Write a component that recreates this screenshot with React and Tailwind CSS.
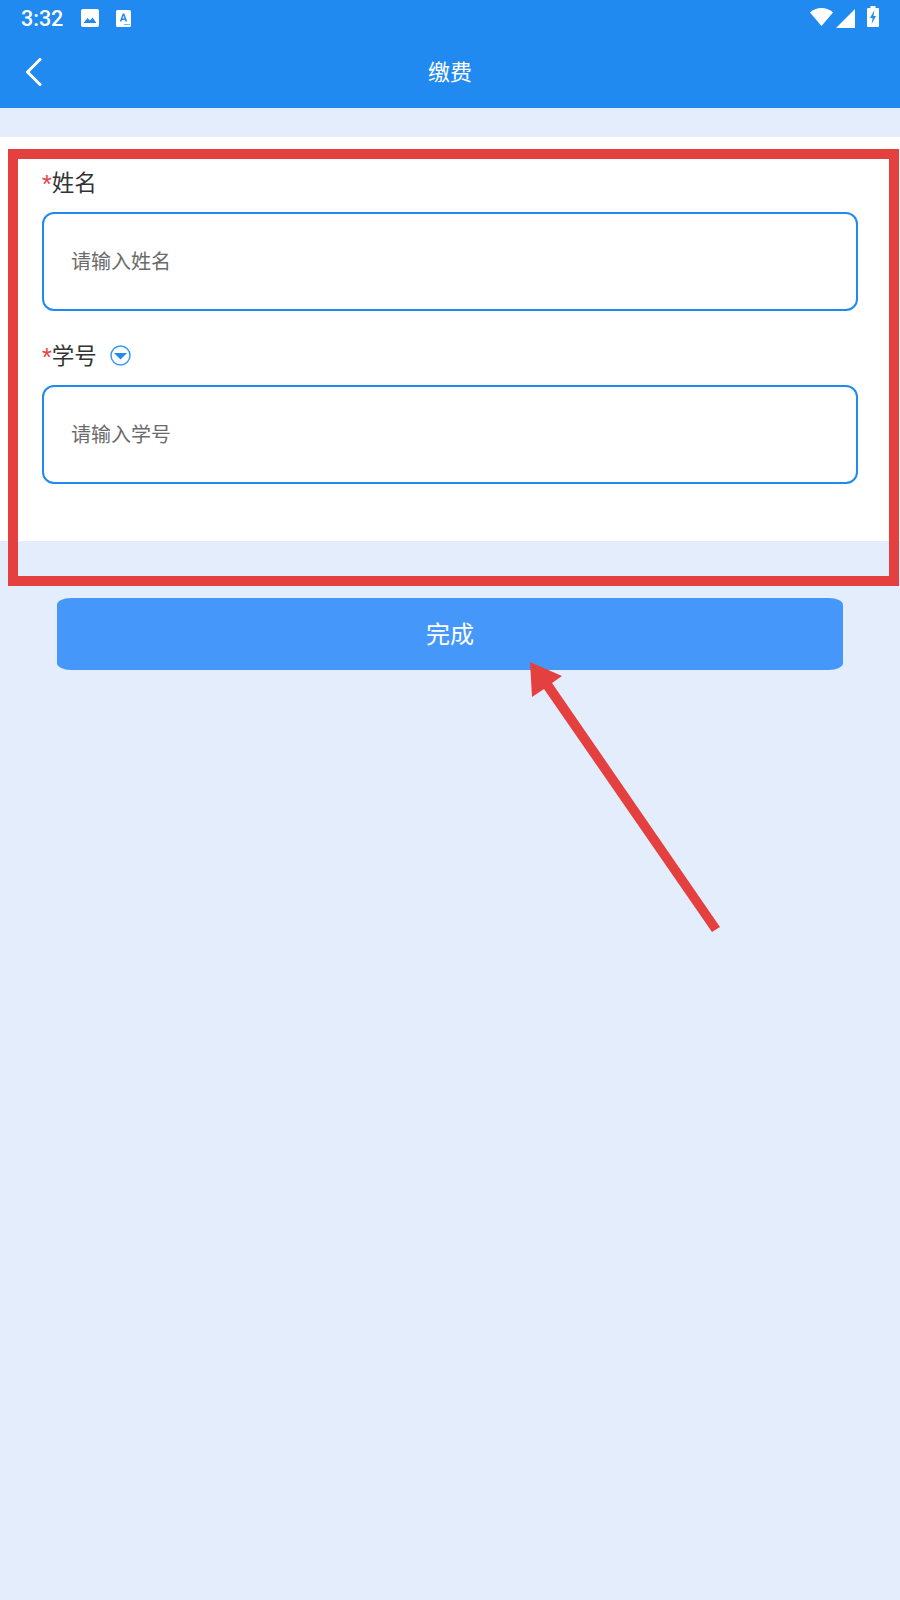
const cjk = "font-['Roboto','Noto_Sans_CJK_SC',sans-serif]";

function StatusBar() {
  return (
    <div className="h-[36px] flex items-center pl-[21px] pr-[21px] text-white">
      <span className="font-['Roboto',sans-serif] text-[21.5px] font-medium leading-none mt-[2px]">3:32</span>
      <svg className="ml-[18px]" width="18" height="18" viewBox="0 0 18 18">
        <rect x="0" y="0" width="18" height="18" rx="2" fill="#fff" />
        <path d="M2.5 14 L6.5 9 L9 11.5 L11.5 8.5 L15.5 14 Z" fill="#208af1" />
      </svg>
      <svg className="ml-[17px]" width="15" height="17" viewBox="0 0 15 17">
        <rect x="0" y="0" width="15" height="17" rx="1.5" fill="#fff" />
        <path d="M3.8 11.5 L6.7 3.5 H8.3 L11.2 11.5 H9.5 L9 10 H6 L5.5 11.5 Z M6.5 8.6 H8.5 L7.5 5.6 Z" fill="#208af1" />
        <path d="M8.5 14 H9.7 V15 H8.5 Z M10.5 14 H11.7 V15 H10.5 Z M12.5 14 H13.7 V15 H12.5 Z" fill="#208af1" />
      </svg>
      <div className="ml-auto flex items-center">
        <svg className="mb-[2px]" width="23" height="18" viewBox="0 0 23 18">
          <path d="M0 4.5 C3 1.5 7 0 11.5 0 C16 0 20 1.5 23 4.5 L11.5 18 Z" fill="#fff" />
        </svg>
        <svg className="ml-[3px]" width="19" height="19" viewBox="0 0 19 19">
          <path d="M0 19 L19 0 V19 Z" fill="#fff" />
        </svg>
        <svg className="ml-[12px] mb-[3px]" width="12" height="21" viewBox="0 0 12 21">
          <path d="M3.5 0 H8.5 V2 H11 A1 1 0 0 1 12 3 V20 A1 1 0 0 1 11 21 H1 A1 1 0 0 1 0 20 V3 A1 1 0 0 1 1 2 H3.5 Z" fill="#fff" />
          <path d="M7.5 4 L3 12 H5.6 L4.6 18 L9 10 H6.4 Z" fill="#208af1" />
        </svg>
      </div>
    </div>
  );
}

function Field({ label, placeholder, hint }) {
  return (
    <div>
      <div className="h-[32px] mb-[13px] flex items-center leading-none text-[22.5px] text-[#333]">
        <span className="text-[#e5484d]">*</span>
        <span>{label}</span>
        {hint && (
          <svg className="ml-[13px] mb-[2px]" width="21" height="21" viewBox="0 0 21 21">
            <circle cx="10.5" cy="10.5" r="9.5" fill="none" stroke="#3d97f2" strokeWidth="1.5" />
            <path d="M4 8 H17 L10.5 14.5 Z" fill="#208af1" />
          </svg>
        )}
      </div>
      <div className="h-[99px] border-2 border-[#208af1] rounded-[12px] flex items-center pl-[27px] text-[20px] text-[#6b6b6b]">
        {placeholder}
      </div>
    </div>
  );
}

export default function App() {
  return (
    <div className={`relative min-h-[1600px] bg-[#e3edfc] ${cjk}`}>
      <header className="bg-[#208af1]">
        <StatusBar />
        <div className="relative h-[72px] flex items-center justify-center">
          <svg className="absolute left-[25px] top-[22px]" width="17" height="28" viewBox="0 0 17 28">
            <path d="M15 1.5 L2.5 14 L15 26.5" fill="none" stroke="#fff" strokeWidth="3" strokeLinecap="round" strokeLinejoin="round" />
          </svg>
          <h1 className="text-white text-[22px] font-normal">缴费</h1>
        </div>
      </header>

      <section className="mt-[29px] bg-white px-[42px] pt-[30px] pb-[57px]">
        <div className="flex flex-col gap-[29px]">
          <Field label="姓名" placeholder="请输入姓名" />
          <Field label="学号" placeholder="请输入学号" hint />
        </div>
      </section>

      <button className="block mx-[57px] mt-[57px] w-[786px] h-[72px] rounded-[14px/7px] bg-[#4598f9] text-white text-[24px] pt-[2px]">
        完成
      </button>

      {/* annotations drawn over the screen */}
      <div className="absolute left-[8px] top-[149px] w-[891px] h-[437px] border-[10px] border-[#e54040] pointer-events-none" />
      <svg className="absolute left-0 top-0 pointer-events-none" width="900" height="1000" viewBox="0 0 900 1000">
        <path d="M530 662 L562 676 L552 683 L720 927 L712 932 L544 689 L532 697 Z" fill="#e54040" />
      </svg>
    </div>
  );
}
